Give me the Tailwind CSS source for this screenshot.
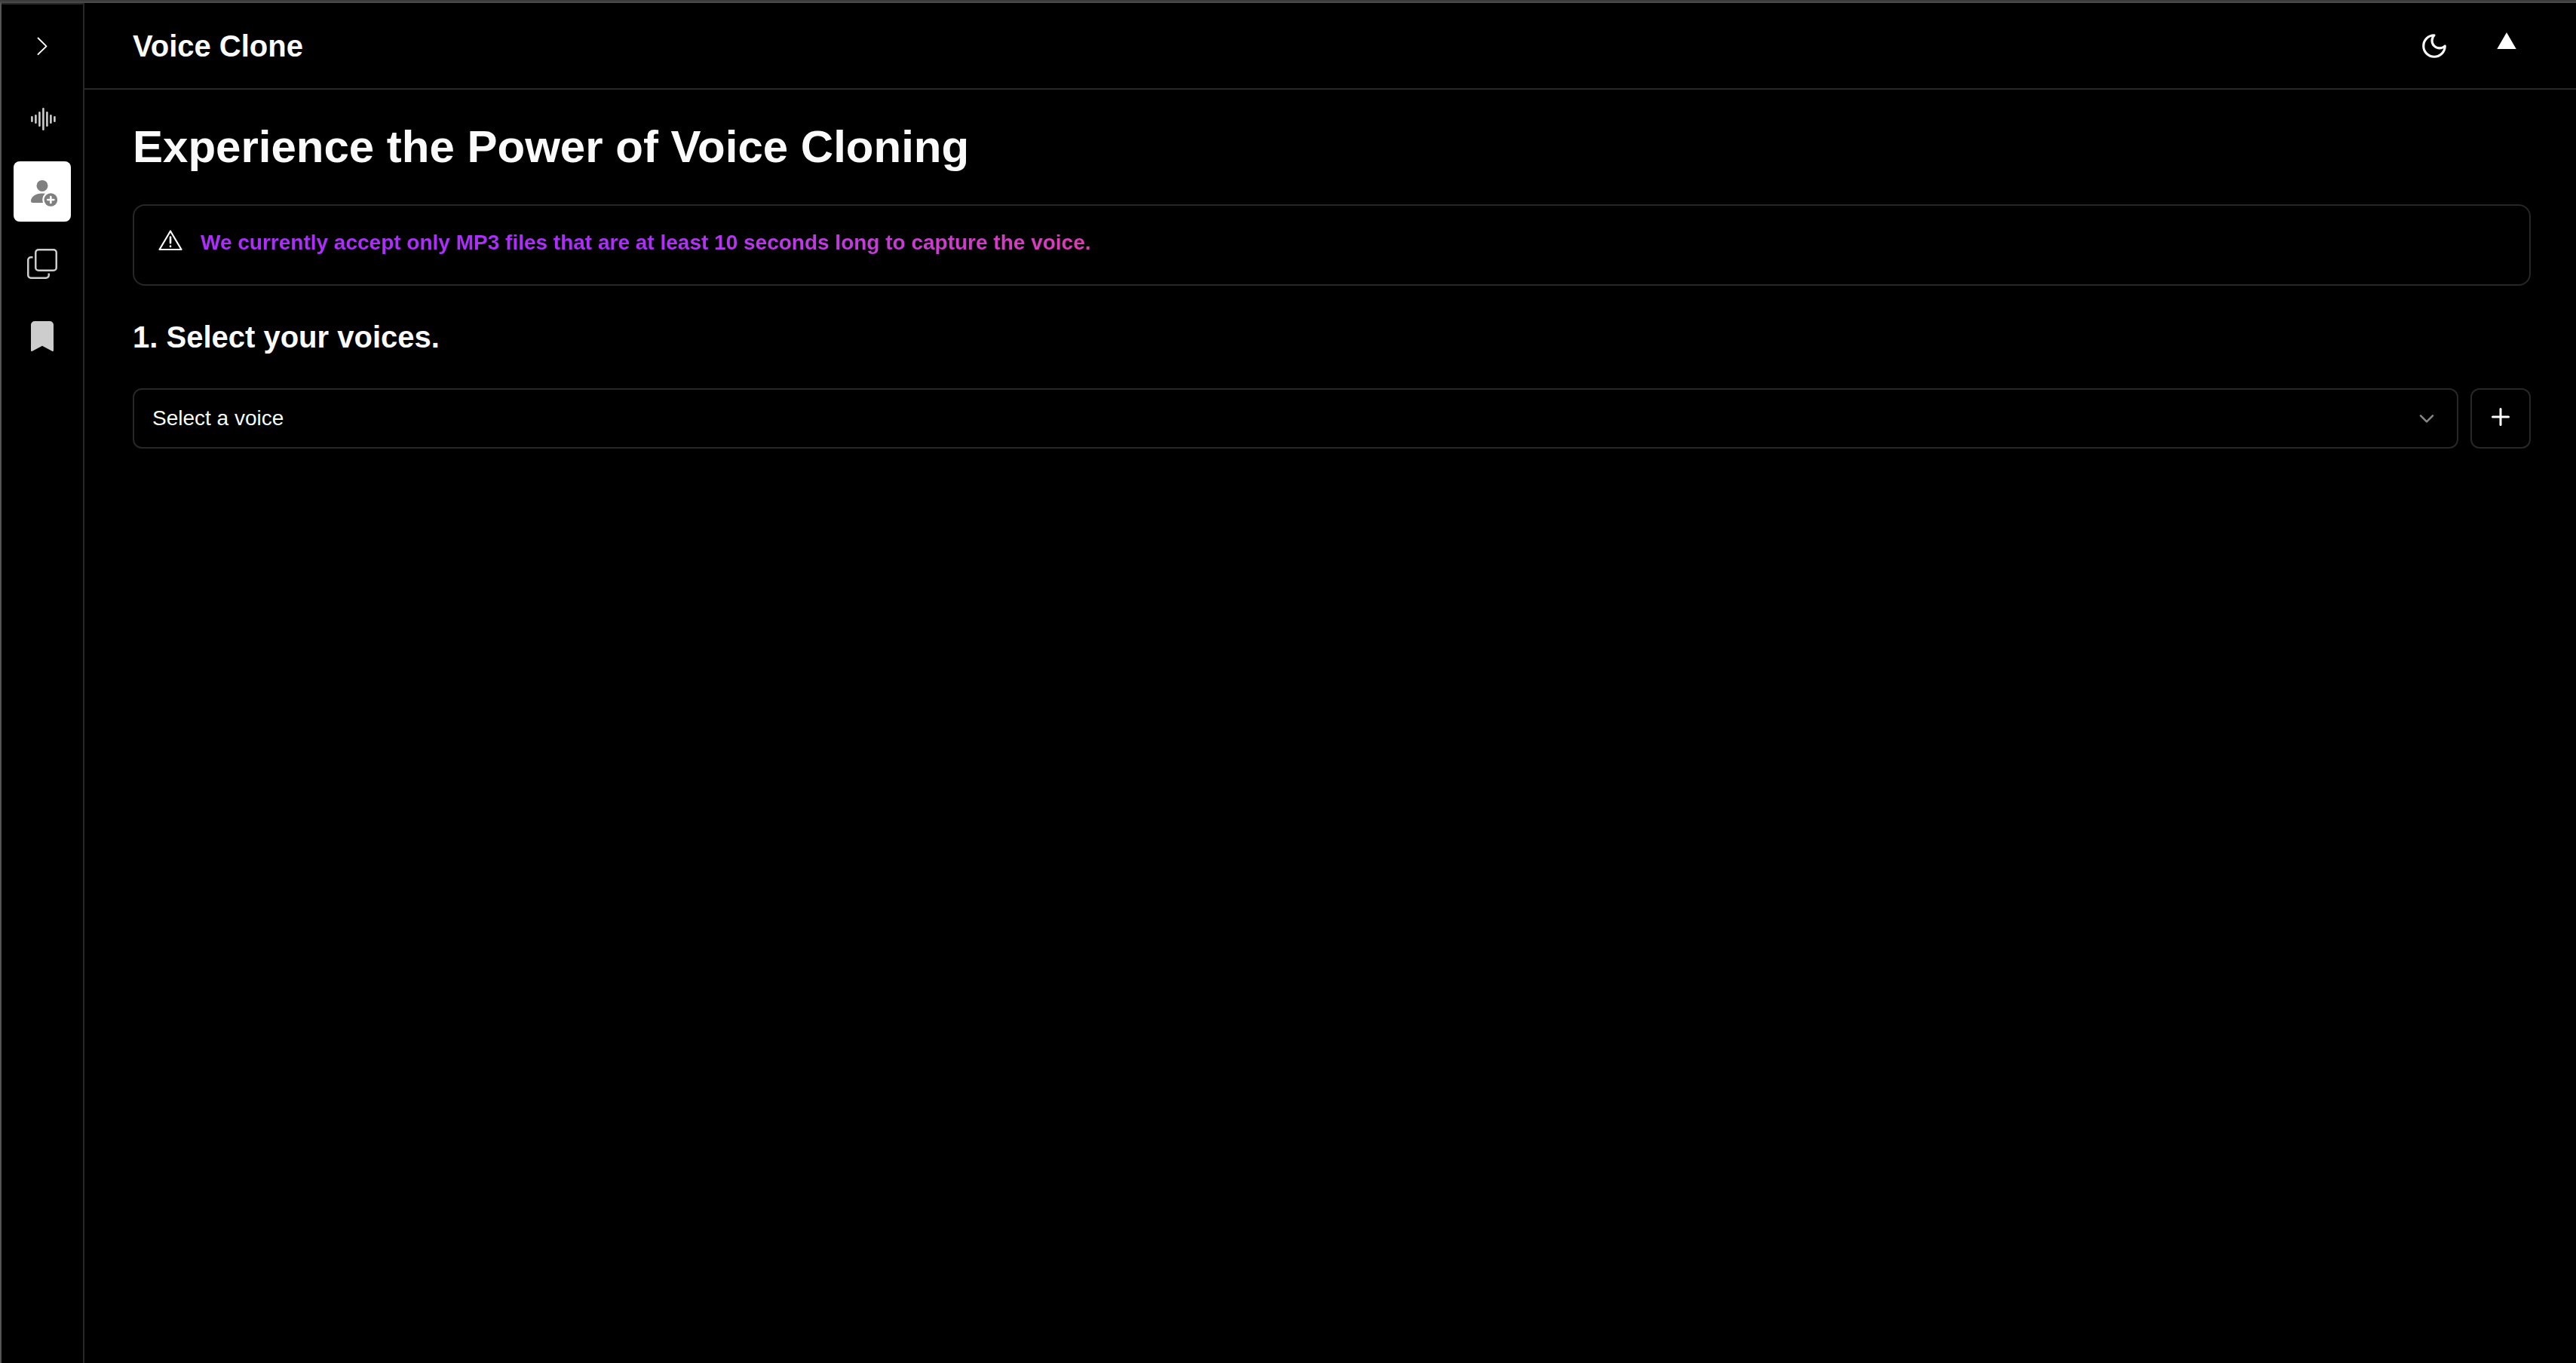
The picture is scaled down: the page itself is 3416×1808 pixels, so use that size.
<!DOCTYPE html>
<html lang="en">
<head>
<meta charset="utf-8">
<title>Voice Clone</title>
<script src="https://cdn.jsdelivr.net/npm/@tailwindcss/browser@4"></script>
</head>
<body class="flex min-h-screen flex-col bg-black font-['Liberation_Sans',Arial,sans-serif] text-neutral-50">
<div class="h-1 border-b-2 border-[#484848] bg-[#3c3c3c]"></div>
<div class="flex flex-1 border-l-2 border-[#555555]">
  <nav aria-label="Main" class="flex flex-col gap-4 border-t-2 border-r-2 border-[#272727] px-4 pt-4">
    <button type="button" aria-label="Expand sidebar" class="flex h-20 w-[76px] items-center justify-center">
      <svg class="size-10" viewBox="0 0 40 40" fill="none" stroke="#fff" stroke-width="1.8" stroke-linecap="round" stroke-linejoin="round"><path d="M14.5 8.5 25.500 19.300 14.500 30"/></svg>
    </button>
    <a href="#" aria-label="Speech" class="flex h-20 w-[76px] items-center justify-center">
      <svg class="size-10" viewBox="0 0 40 40" fill="none" stroke="#cdcdcd" stroke-width="2.6" stroke-linecap="round"><path d="M6.4 17.3v5.4M11.4 15.3v9.4M16.4 11.3v17.4M21.4 6.3v27.4M26.4 11.3v17.4M31.4 15.3v9.4M36.4 17.3v5.4"/></svg>
    </a>
    <a href="#" aria-label="Voice clone" aria-current="page" class="flex h-20 w-[76px] items-center justify-center rounded-lg bg-white">
      <svg class="size-10" viewBox="0 0 40 40"><g fill="#808080"><circle cx="20" cy="12.4" r="7.5"/><path d="M20 22.6c5 0 9 1.400 11 4v8.400H7.500C6 35 5 34.200 5 32.800 5 27 11 22.600 20 22.600Z"/></g><circle cx="31.300" cy="31" r="11" fill="#fff"/><circle cx="31.300" cy="31" r="8.800" fill="#808080"/><path d="M31.300 27v8M27.300 31h8" stroke="#fff" stroke-width="2.600" stroke-linecap="round"/></svg>
    </a>
    <a href="#" aria-label="Copies" class="flex h-20 w-[76px] items-center justify-center">
      <svg class="size-10" viewBox="0 0 40 40" fill="none" stroke="#cdcdcd" stroke-width="2.5"><rect x="11.250" y="1.250" width="27.500" height="27.500" rx="3.750"/><path d="M7.500 11.250H5A3.750 3.750 0 0 0 1.250 15V35A3.750 3.750 0 0 0 5 38.750H25A3.750 3.750 0 0 0 28.750 35V32.500"/></svg>
    </a>
    <a href="#" aria-label="Saved" class="flex h-20 w-[76px] items-center justify-center">
      <svg class="size-10" viewBox="0 0 40 40" fill="#cdcdcd"><path d="M5 5a5 5 0 0 1 5-5h20a5 5 0 0 1 5 5v33.800a1.200 1.200 0 0 1-1.900 1L20 32.800 6.900 39.800A1.200 1.200 0 0 1 5 38.800Z"/></svg>
    </a>
  </nav>
  <div class="flex min-w-0 flex-1 flex-col">
    <header class="flex h-[115px] items-center justify-between border-b-2 border-[#272727] pr-[60px] pl-16">
      <p class="text-[40px]/[56px] font-bold">Voice Clone</p>
      <div class="flex items-center gap-7">
        <button type="button" aria-label="Toggle theme" class="flex size-[72px] items-center justify-center">
          <svg class="size-[38px]" viewBox="0 0 24 24" fill="none" stroke="#fafafa" stroke-width="2" stroke-linecap="round" stroke-linejoin="round"><path d="M12 3a6 6 0 0 0 9 9 9 9 0 1 1-9-9Z"/></svg>
        </button>
        <button type="button" aria-label="Account" class="flex h-[72px] w-16 items-start justify-center pt-[18px]">
          <svg class="h-[22px] w-[26px]" viewBox="0 0 26 22" fill="#fff"><path d="M13 0 25.700 22H.3Z"/></svg>
        </button>
      </div>
    </header>
    <main class="flex flex-col gap-10 pt-10 pr-[60px] pl-16">
      <h1 class="text-[60px]/[72px] font-bold">Experience the Power of Voice Cloning</h1>
      <div role="alert" class="flex items-start gap-6 rounded-2xl border-2 border-[#272727] px-8 pt-8 pb-[38px]">
        <svg class="size-8" viewBox="0 0 32 32" fill="none" stroke="#fafafa" stroke-width="2.200" stroke-linecap="round" stroke-linejoin="round"><path d="M16 1.500 30.500 26H1.500Z"/><path d="M16 9.500v7.800M16 21.600v.3" stroke-width="2.600"/></svg>
        <p class="bg-linear-to-r from-[#ad2efb] from-50% to-[#dc3cb4] bg-clip-text text-[28px]/[34px] font-bold text-transparent">We currently accept only MP3 files that are at least 10 seconds long to capture the voice.</p>
      </div>
      <h2 class="text-[40px]/[56px] font-bold"><label for="voice">1. Select your voices.</label></h2>
      <div class="flex gap-4">
        <div class="relative flex-1">
          <select id="voice" class="h-20 w-full appearance-none rounded-xl border-2 border-[#272727] bg-black px-6 text-[28px]/[40px] text-neutral-50"><option>Select a voice</option></select>
          <svg class="pointer-events-none absolute top-6 right-[26px] size-8" viewBox="0 0 32 32" fill="none" stroke="#858585" stroke-width="2.600" stroke-linecap="round" stroke-linejoin="round"><path d="M8 12.300 16 20.300 24 12.300"/></svg>
        </div>
        <button type="button" aria-label="Add voice" class="flex size-20 items-center justify-center rounded-xl border-2 border-[#272727] pb-1">
          <svg class="size-8" viewBox="0 0 32 32" fill="none" stroke="#fff" stroke-width="3" stroke-linecap="round"><path d="M16 5.500v21M5.500 16h21"/></svg>
        </button>
      </div>
    </main>
  </div>
</div>
</body>
</html>
